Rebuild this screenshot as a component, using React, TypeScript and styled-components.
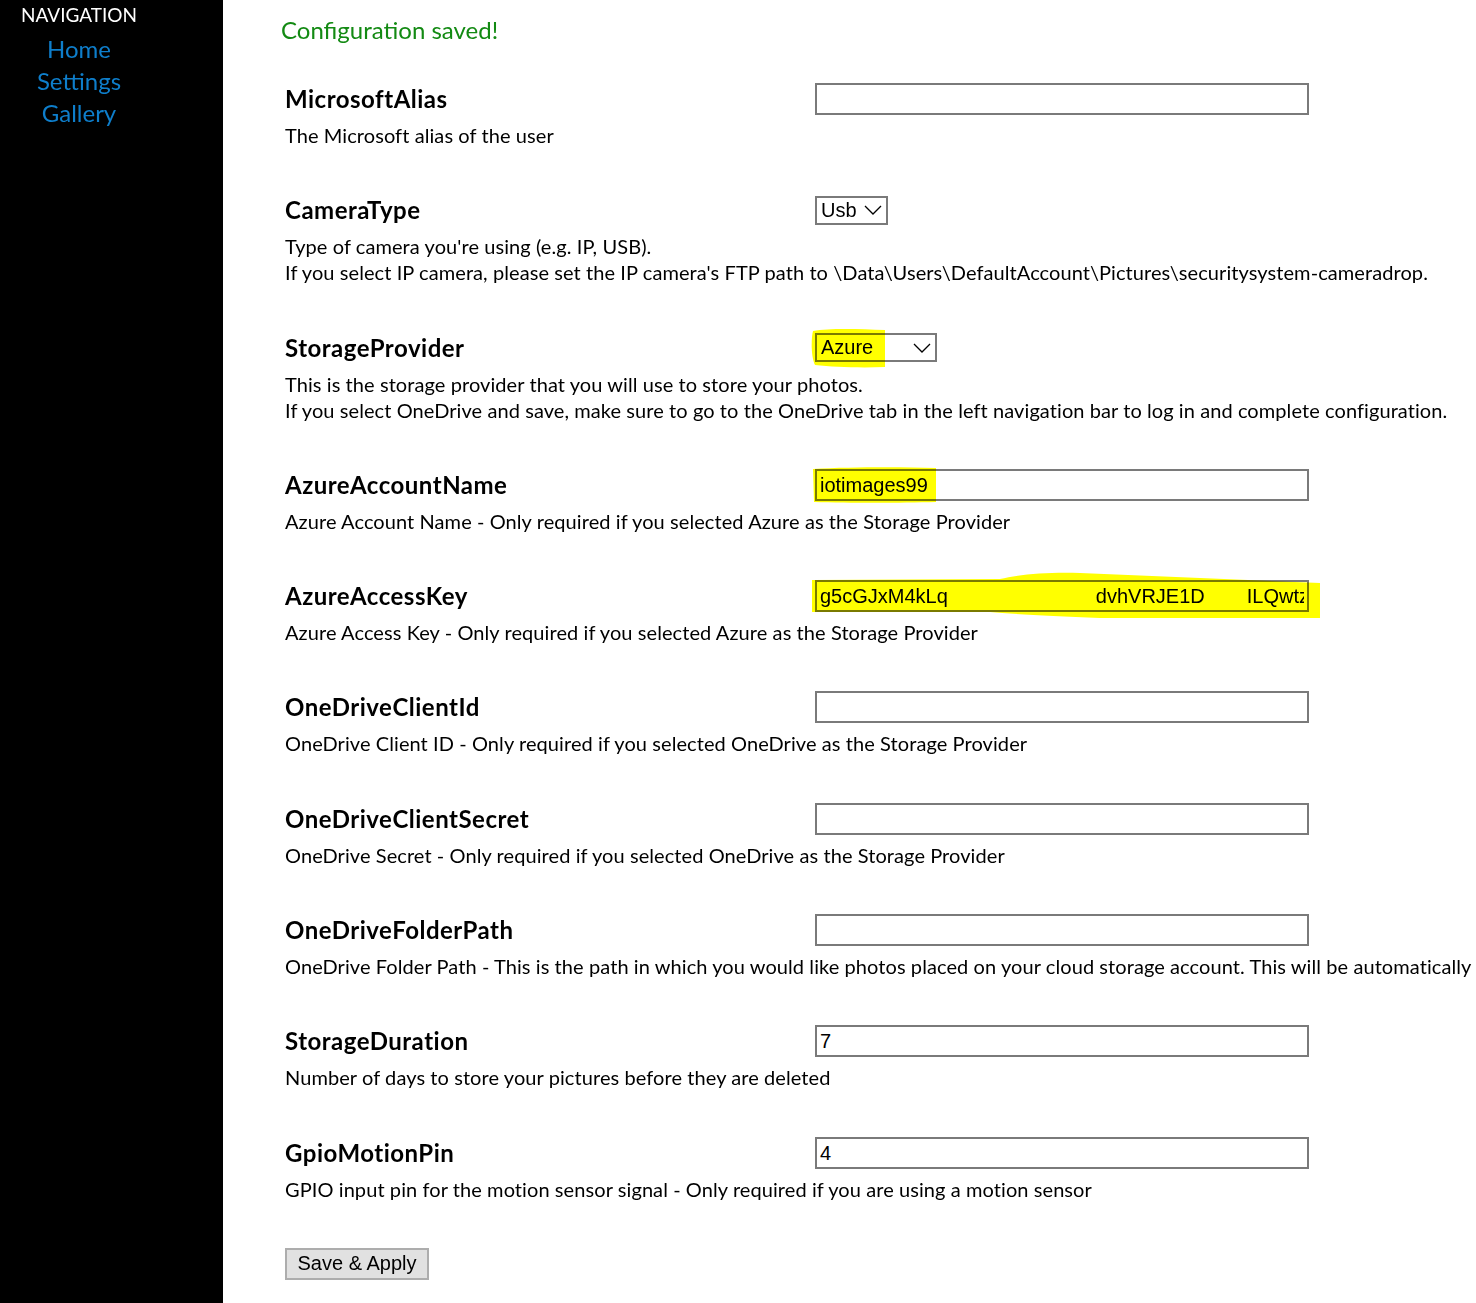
import React from 'react';
import styled, { createGlobalStyle } from 'styled-components';

const GlobalStyle = createGlobalStyle`
  html, body {
    margin: 0;
    padding: 0;
    background: #fff;
    overflow: hidden;
  }
  body {
    font-family: Lato, "Noto Sans", sans-serif;
  }
`;

const Page = styled.div`
  display: flex;
  min-height: 1303px;
  width: 1476px;
  overflow: hidden;
`;

const Sidebar = styled.nav`
  flex: 0 0 223px;
  background: #000;
`;

const NavInner = styled.div`
  width: 158px;
  padding-top: 3px;
  text-align: center;
`;

const NavTitle = styled.div`
  color: #fff;
  font-size: 19px;
  line-height: 24px;
  margin-bottom: 6px;
`;

const NavLink = styled.a`
  display: block;
  color: #0e7ecb;
  font-size: 24px;
  line-height: 32px;
  text-decoration: none;
`;

const Main = styled.main`
  flex: 1;
  padding: 14px 0 0 62px;
  min-width: 0;
`;

const Saved = styled.div`
  color: #138a13;
  font-size: 24px;
  line-height: 32px;
  margin-left: -4px;
  margin-bottom: 37px;
`;

const Row = styled.section`
  display: grid;
  grid-template-columns: 530px 494px;
  align-items: center;
  margin-bottom: 46.3px;
`;

const Title = styled.h3`
  margin: 0;
  font-size: 24px;
  font-weight: 700;
  letter-spacing: 0.5px;
  line-height: 32px;
  color: #000;
`;

const Desc = styled.div`
  grid-column: 1 / span 2;
  margin-top: 7px;
  font-size: 20px;
  letter-spacing: 0.08px;
  line-height: 26px;
  color: #000;
  white-space: nowrap;
`;

const Field = styled.div`
  position: relative;
  box-sizing: border-box;
  height: 32px;
  border: 2px solid #7a7a7a;
  background: #fff;
  padding: 0 3px;
  font-family: "Liberation Sans", Arial, sans-serif;
  font-size: 20px;
  line-height: 28px;
  color: #000;
  white-space: nowrap;
`;

const FieldText = styled.div`
  overflow: hidden;
`;

const Select = styled.div<{ $width: number }>`
  position: relative;
  box-sizing: border-box;
  width: ${(p) => p.$width}px;
  height: 29px;
  border: 2px solid #7a7a7a;
  background: #fff;
  padding: 0 4px;
  display: flex;
  align-items: center;
  justify-content: space-between;
  font-family: "Liberation Sans", Arial, sans-serif;
  font-size: 20px;
  color: #000;
`;

// highlighter strokes drawn over the screenshot, multiplied so text and borders show through
const Marker = styled.svg`
  position: absolute;
  pointer-events: none;
  mix-blend-mode: multiply;
`;

const Gap = styled.span<{ $w: number }>`
  display: inline-block;
  width: ${(p) => p.$w}px;
`;

const SaveButton = styled.button`
  box-sizing: border-box;
  width: 144px;
  height: 32px;
  background: #e1e1e1;
  border: 2px solid #adadad;
  border-radius: 0;
  font-family: "Liberation Sans", Arial, sans-serif;
  font-size: 20px;
  color: #000;
  padding: 0;
`;

const Chevron = () => (
  <svg width="18" height="10" viewBox="0 0 18 10">
    <path d="M1 1 L9 9 L17 1" fill="none" stroke="#000" strokeWidth="1.3" />
  </svg>
);

type Setting = {
  name: string;
  desc: string[];
  control: React.ReactNode;
};

const settings: Setting[] = [
  {
    name: 'MicrosoftAlias',
    desc: ['The Microsoft alias of the user'],
    control: <Field />,
  },
  {
    name: 'CameraType',
    desc: [
      "Type of camera you're using (e.g. IP, USB).",
      "If you select IP camera, please set the IP camera's FTP path to \\Data\\Users\\DefaultAccount\\Pictures\\securitysystem-cameradrop.",
    ],
    control: (
      <Select $width={73}>
        <span>Usb</span>
        <Chevron />
      </Select>
    ),
  },
  {
    name: 'StorageProvider',
    desc: [
      'This is the storage provider that you will use to store your photos.',
      'If you select OneDrive and save, make sure to go to the OneDrive tab in the left navigation bar to log in and complete configuration.',
    ],
    control: (
      <Select $width={122}>
        <span>Azure</span>
        <Chevron />
        <Marker width="80" height="42" viewBox="0 0 80 42" style={{ left: -8, top: -8 }}>
          <path d="M4 4 C20 1 50 2 76 3 L76 40 C50 41 25 40 6 38 C2 30 2 12 4 4 Z" fill="#ffff00" />
        </Marker>
      </Select>
    ),
  },
  {
    name: 'AzureAccountName',
    desc: ['Azure Account Name - Only required if you selected Azure as the Storage Provider'],
    control: (
      <Field>
        <FieldText>iotimages99</FieldText>
        <Marker width="130" height="40" viewBox="0 0 130 40" style={{ left: -7, top: -5 }}>
          <path d="M3 3 C40 1 90 1 126 2 L126 36 C90 37 40 37 4 36 Z" fill="#ffff00" />
        </Marker>
      </Field>
    ),
  },
  {
    name: 'AzureAccessKey',
    desc: ['Azure Access Key - Only required if you selected Azure as the Storage Provider'],
    control: (
      <Field>
        <FieldText>
          g5cGJxM4kLq
          <Gap $w={148} />
          dvhVRJE1D
          <Gap $w={42} />
          ILQwtz
        </FieldText>
        <Marker width="512" height="54" viewBox="0 0 512 54" style={{ left: -7, top: -14 }}>
          <path
            d="M2 12 L190 11 C210 6 240 4 270 5 L510 15 L510 50 L290 50 C240 48 200 46 180 44 L2 44 Z"
            fill="#ffff00"
          />
        </Marker>
      </Field>
    ),
  },
  {
    name: 'OneDriveClientId',
    desc: ['OneDrive Client ID - Only required if you selected OneDrive as the Storage Provider'],
    control: <Field />,
  },
  {
    name: 'OneDriveClientSecret',
    desc: ['OneDrive Secret - Only required if you selected OneDrive as the Storage Provider'],
    control: <Field />,
  },
  {
    name: 'OneDriveFolderPath',
    desc: [
      'OneDrive Folder Path - This is the path in which you would like photos placed on your cloud storage account. This will be automatically created if it does not exist.',
    ],
    control: <Field />,
  },
  {
    name: 'StorageDuration',
    desc: ['Number of days to store your pictures before they are deleted'],
    control: <Field>7</Field>,
  },
  {
    name: 'GpioMotionPin',
    desc: ['GPIO input pin for the motion sensor signal - Only required if you are using a motion sensor'],
    control: <Field>4</Field>,
  },
];

export default function App() {
  return (
    <>
      <GlobalStyle />
      <Page>
        <Sidebar>
          <NavInner>
            <NavTitle>NAVIGATION</NavTitle>
            <NavLink href="#">Home</NavLink>
            <NavLink href="#">Settings</NavLink>
            <NavLink href="#">Gallery</NavLink>
          </NavInner>
        </Sidebar>
        <Main>
          <Saved>Configuration saved!</Saved>
          {settings.map((s) => (
            <Row key={s.name}>
              <Title>{s.name}</Title>
              <div>{s.control}</div>
              <Desc>
                {s.desc.map((line) => (
                  <div key={line}>{line}</div>
                ))}
              </Desc>
            </Row>
          ))}
          <SaveButton>Save &amp; Apply</SaveButton>
        </Main>
      </Page>
    </>
  );
}
